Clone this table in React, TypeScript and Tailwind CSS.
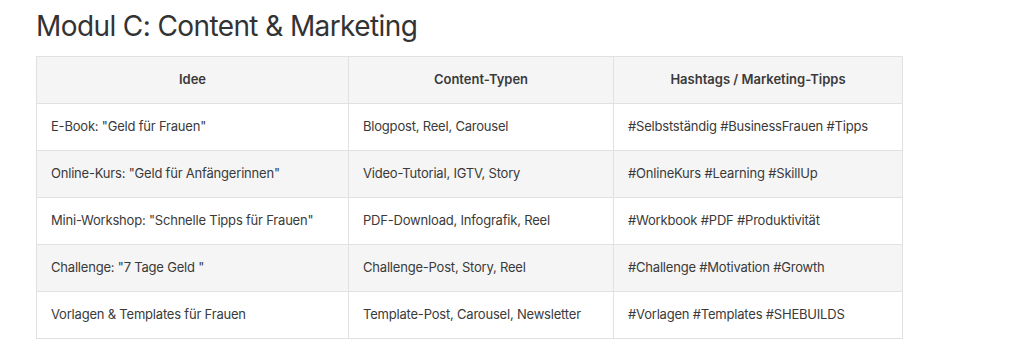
const rows = [
  ["E-Book: \"Geld für Frauen\"", "Blogpost, Reel, Carousel", "#Selbstständig #BusinessFrauen #Tipps"],
  ["Online-Kurs: \"Geld für Anfängerinnen\"", "Video-Tutorial, IGTV, Story", "#OnlineKurs #Learning #SkillUp"],
  ["Mini-Workshop: \"Schnelle Tipps für Frauen\"", "PDF-Download, Infografik, Reel", "#Workbook #PDF #Produktivität"],
  ["Challenge: \"7 Tage Geld \"", "Challenge-Post, Story, Reel", "#Challenge #Motivation #Growth"],
  ["Vorlagen & Templates für Frauen", "Template-Post, Carousel, Newsletter", "#Vorlagen #Templates #SHEBUILDS"],
];

export default function App() {
  return (
    <div className="w-[1024px] h-[343px] bg-white pl-9 pt-[8px] font-['Inter',sans-serif] text-[#333]">
      <h2 className="text-[28px] leading-[36px] font-normal tracking-[-0.6px] text-[#333]">Modul C: Content &amp; Marketing</h2>
      <table className="mt-3 w-[866px] table-fixed border-collapse text-[13px] tracking-[-0.2px] text-[#3a3a3a]">
        <colgroup>
          <col className="w-[312px]" />
          <col className="w-[265px]" />
          <col className="w-[289px]" />
        </colgroup>
        <thead>
          <tr className="bg-[#f5f5f5] h-[47px]">
            <th className="border border-[#e1e1e1] font-semibold text-center tracking-normal">Idee</th>
            <th className="border border-[#e1e1e1] font-semibold text-center tracking-normal">Content-Typen</th>
            <th className="border border-[#e1e1e1] font-semibold text-center tracking-normal">Hashtags / Marketing-Tipps</th>
          </tr>
        </thead>
        <tbody>
          {rows.map((r, i) => (
            <tr key={i} className={`h-[47px] ${i % 2 === 1 ? "bg-[#f5f5f5]" : "bg-white"}`}>
              {r.map((c, j) => (
                <td key={j} className="border border-[#e1e1e1] px-[14px] text-left">{c}</td>
              ))}
            </tr>
          ))}
        </tbody>
      </table>
    </div>
  );
}
